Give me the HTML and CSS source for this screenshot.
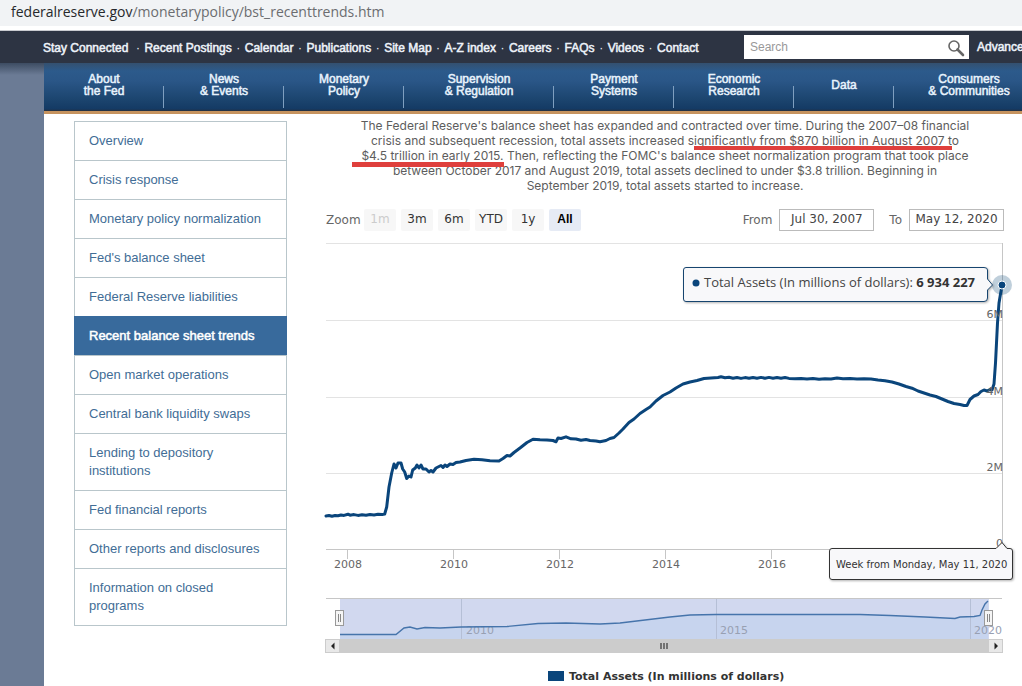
FILE: index.html
```html
<!DOCTYPE html>
<html lang="en">
<head>
<meta charset="utf-8">
<title>Recent balance sheet trends</title>
<link rel="stylesheet" href="styles.css">
</head>
<body>
<div class="address"><span class="address-host">federalreserve.gov</span>/monetarypolicy/bst_recenttrends.htm</div>
<header class="topbar">
  <nav class="toplinks" aria-label="Utility">
    <a class="wide" href="#">Stay Connected</a><a href="#">Recent Postings</a><a href="#">Calendar</a><a href="#">Publications</a><a href="#">Site Map</a><a href="#">A-Z index</a><a href="#">Careers</a><a href="#">FAQs</a><a href="#">Videos</a><a href="#">Contact</a>
  </nav>
  <form class="search">
    <input type="search" placeholder="Search" aria-label="Search">
    <button type="submit" aria-label="Submit search">
      <svg width="18" height="18" viewBox="0 0 18 18"><circle cx="7" cy="7" r="5" fill="none" stroke="#666" stroke-width="1.600"/><path d="M10.500 10.500L16 16" stroke="#666" stroke-width="2.600" stroke-linecap="round"/></svg>
    </button>
  </form>
  <a class="advanced" href="#">Advanced</a>
</header>
<div class="page">
  <nav class="mainnav" aria-label="Main">
    <a href="#">About<br>the Fed</a><a href="#">News<br>&amp; Events</a><a href="#">Monetary<br>Policy</a><a class="w150" href="#">Supervision<br>&amp; Regulation</a><a href="#">Payment<br>Systems</a><a href="#">Economic<br>Research</a><a class="w100" href="#">Data</a><a class="w150" href="#">Consumers<br>&amp; Communities</a>
  </nav>
  <div class="columns">
    <nav class="sidenav" aria-label="Section">
      <a href="#">Overview</a>
      <a href="#">Crisis response</a>
      <a href="#">Monetary policy normalization</a>
      <a href="#">Fed's balance sheet</a>
      <a href="#">Federal Reserve liabilities</a>
      <a class="current" href="#" aria-current="page">Recent balance sheet trends</a>
      <a href="#">Open market operations</a>
      <a href="#">Central bank liquidity swaps</a>
      <a href="#">Lending to depository institutions</a>
      <a href="#">Fed financial reports</a>
      <a href="#">Other reports and disclosures</a>
      <a href="#">Information on closed programs</a>
    </nav>
    <main class="content">
      <p class="intro">The Federal Reserve's balance sheet has expanded and contracted over time. During the 2007–08 financial<br>crisis and subsequent recession, total assets increased s<span class="mark">ignificantly from $870 billion in August 2007 t</span>o<br><span class="mark low">$4.5 trillion in early 2015.</span> Then, reflecting the FOMC's balance sheet normalization program that took place<br>between October 2017 and August 2019, total assets declined to under $3.8 trillion. Beginning in<br>September 2019, total assets started to increase.</p>
      <form class="range">
        <span class="zoom-label">Zoom</span>
        <div class="zoom">
          <button type="button" disabled>1m</button><button type="button">3m</button><button type="button">6m</button><button type="button">YTD</button><button type="button">1y</button><button class="on" type="button">All</button>
        </div>
        <label class="from">From <input type="text" value="Jul 30, 2007"></label>
        <label>To <input type="text" value="May 12, 2020"></label>
      </form>
      <svg class="chart" viewBox="320 240 702 446" role="img" aria-label="Total assets in millions of dollars">
        <path class="grid" d="M326 243.500H1002M326 320.500H1002M326 397.500H1002M326 473.500H1002"/>
        <path class="axis" d="M326 549.500H1002M347.500 549V559M453.500 549V559M559.500 549V559M665.500 549V559M771.500 549V559M1002.500 243V549"/>
        <g class="lbl" text-anchor="middle">
          <text x="348" y="568">2008</text><text x="454" y="568">2010</text><text x="560" y="568">2012</text><text x="666" y="568">2014</text><text x="772" y="568">2016</text>
        </g>
        <path class="line" d="M326 516L329 515.500L332 516.200L335 515.500L338 515.800L341 515L344 515.400L348 514.200L350 515.200L354 514.600L358 515.400L362 514.800L366 515.300L370 514.500L374 515L378 514.300L382 514.600L384.700 514L386.700 507L389 487L391.700 473L394 464L396 468L398 463L401 463L402.700 469L404.700 472L406.700 478.500L409 476L411 477L412.700 470L415.300 468L417 465L419 468L421 465L423 469L426 469L429 472L431 470.500L433 472L436 468L439 466.500L441 465.500L443 467.500L445 465L447 466.500L450 464L453 464.500L456 462.500L460 462L466 460.500L474 459.300L482 459.800L490 460.800L499 461L503 458.500L507 455.500L510 456L514 452.500L520 448L527 442.500L533 439.200L540 439.800L547 440L553 440.500L556 441.800L558 438L561 438.500L566 436.800L571 438.800L576 439L581 440.300L586 439.500L590 440.500L596 441L600 441.800L606 440.500L610 438.500L614 437.500L619 433L623 429L629 422.500L634 419L640 413.500L646 409.500L650 407L656 401L663 395.500L670 392L676 388L683 384L690 382L697 380.500L704 378.500L711 378L718 377.500L721 376.800L725 377.700L729 377.300L733 378.300L737 377.500L741 378.400L745 377.600L749 378.300L753 377.500L757 378.200L761 377.400L765 378.200L769 377.400L773 378.200L777 377.500L781 378.200L785 377.500L789 378.400L795 378.800L801 378.500L807 379L813 378.500L819 379.300L825 378.700L831 379L837 378L843 378.700L850 378.500L857 379L864 378.800L871 379L878 380L885 380.700L892 382L899 384L906 386.500L912 388.200L918 391L924 393L930 395L936 396.500L942 399L948 401.500L954 403.500L960 404.500L964 405.500L967 405.500L970 399.500L974 396L978 394.500L981 391.500L984 390L987 391L990 389.500L992 390L994 384L995.500 363L997.500 323L999 303L1000.500 294L1002 286"/>
        <g class="lbl ylbl" text-anchor="end">
          <text x="1003" y="318">6M</text><text x="1003" y="395">4M</text><text x="1003" y="471">2M</text><text x="1003" y="547">0</text>
        </g>
        <circle cx="1002" cy="285" r="10" fill="#003e70" fill-opacity=".25"/>
        <circle cx="1002" cy="285" r="4" fill="#0a457b" stroke="#fff"/>
        <path class="tip tip-blue" d="M686 267.500H984Q987.500 267.500 987.500 270V279L992.500 285L987.500 290V298Q987.500 301.500 984 301.500H686Q683.500 301.500 683.500 299V270Q683.500 267.500 686 267.500Z"/>
        <circle cx="696" cy="283" r="3.500" fill="#0a457b"/>
        <text class="tiptext" x="704" y="287">Total Assets (In millions of dollars): <tspan class="bold">6 934 227</tspan></text>
        <path class="tip" d="M832 548.500H996L1002 542.500L1007 548.500H1010Q1012.500 548.500 1012.500 551V577Q1012.500 579.500 1010 579.500H832Q829.500 579.500 829.500 577V551Q829.500 548.500 832 548.500Z"/>
        <text class="datetext" x="836" y="568">Week from Monday, May 11, 2020</text>
        <path class="axis" d="M326 598.500H1002"/>
        <rect x="340" y="599" width="649" height="40" fill="#d1d8ef"/>
        <path fill="#c7d4ee" d="M340 639V634.500H396L404 628L410 627L417 629L425 627.500L440 628L461 627L507 626.500L538 623.500L566 623L600 624L620 623L670 617L690 615L716 614.500H860L890 615.500L925 617L955 618.500L960 617L980 616L985 604L988 601V639Z"/>
        <path d="M461.500 599V639M716.500 599V639M970.500 599V639" stroke="#b5bfd6"/>
        <g class="navlbl"><text x="466" y="634">2010</text><text x="720" y="634">2015</text><text x="974" y="634">2020</text></g>
        <path fill="none" stroke="#4674ab" stroke-width="1.400" d="M340 634.500H396L404 628L410 627L417 629L425 627.500L440 628L461 627L507 626.500L538 623.500L566 623L600 624L620 623L670 617L690 615L716 614.500H860L890 615.500L925 617L955 618.500L960 617L974 616.500L980 615.500L982 610L985 604L988 601"/>
        <g fill="#f5f5f5" stroke="#999"><rect x="335.500" y="610.500" width="8" height="15"/><rect x="984.500" y="610.500" width="8" height="15"/></g>
        <path d="M338.500 614V622M340.500 614V622M987.500 614V622M989.500 614V622" stroke="#888"/>
        <rect x="339" y="639" width="650" height="14" fill="#ccc"/>
        <g fill="#e8e8e8" stroke="#ccc"><rect x="325.500" y="639.500" width="14" height="13"/><rect x="988.500" y="639.500" width="14" height="13"/></g>
        <path d="M334.500 642.500V649.500L331 646ZM994.500 642.500V649.500L998 646Z" fill="#222"/>
        <path d="M661 643V649M664 643V649M667 643V649" stroke="#555" stroke-width="1.500"/>
        <rect x="548" y="671" width="16" height="10" fill="#0a457b"/>
        <text class="legend" x="569" y="680">Total Assets (In millions of dollars)</text>
      </svg>
    </main>
  </div>
</div>
</body>
</html>
```
FILE: styles.css
```css
* { box-sizing: border-box; }
body {
  margin: 0;
  min-height: 100vh;
  display: flex;
  flex-direction: column;
  overflow-x: hidden;
  background: #fff;
  font-family: "Liberation Sans", Arial, sans-serif;
}
a { color: inherit; text-decoration: none; }
.address {
  height: 26px;
  padding-left: 11px;
  margin-bottom: 4px;
  background: #f1f3f5;
  color: #6b6d70;
  font: 14px/24px "Open Sans", sans-serif;
}
.address-host { color: #26282b; }
.topbar {
  height: 33px;
  flex: none;
  display: flex;
  align-items: center;
  padding-left: 43px;
  border-top: 1px solid #c9cbd0;
  background: #2d3443;
  color: #eef3fa;
  font-size: 12px;
  -webkit-text-stroke: 0.5px currentColor;
  white-space: nowrap;
}
.toplinks { width: 701px; flex: none; display: flex; padding-top: 1px; }
.toplinks a + a::before {
  content: "·";
  display: inline-block;
  width: 13px;
  text-align: center;
  -webkit-text-stroke: 0;
}
.toplinks .wide { margin-right: 3px; }
.search { display: flex; width: 225px; height: 24px; flex: none; background: #fff; margin-right: 8px; }
.search input {
  flex: 1;
  min-width: 0;
  border: 0;
  padding: 0 6px;
  background: none;
  font: 12px "Liberation Sans", Arial, sans-serif;
  -webkit-text-stroke: 0;
}
.search input::placeholder { color: #999; }
.search button { border: 0; padding: 4px 4px 0 0; background: none; }
.page {
  flex: 1;
  padding-left: 44px;
  background: linear-gradient(#3d4c62, #6b7b95 12px) left / 44px 100% no-repeat;
}
.mainnav {
  display: flex;
  height: 51px;
  overflow: hidden;
  border-bottom: 3px solid #c6935e;
  background: linear-gradient(#34506f, #2c5a8b 8px, #2a5687 18px, #1c456f 36px, #143a64 46px, #262f3c 48px);
  color: #e8f3fd;
  font-size: 12px;
  -webkit-text-stroke: 0.5px currentColor;
  line-height: 12px;
  text-align: center;
}
.mainnav a {
  width: 120px;
  flex: none;
  display: flex;
  flex-direction: column;
  justify-content: center;
  padding-bottom: 5px;
  background: linear-gradient(#7f9fc0, #7f9fc0) right 23px / 1px 22px no-repeat;
}
.mainnav .w150 { width: 150px; }
.mainnav .w100 { width: 100px; }
.columns { display: flex; padding-left: 30px; }
.sidenav {
  width: 213px;
  flex: none;
  margin-top: 7px;
  border: 1px solid #b9c6cb;
  align-self: flex-start;
  color: #426d96;
  font-size: 13px;
  line-height: 18px;
}
.sidenav a { display: block; padding: 10px 20px 10px 14px; }
.sidenav a + a { border-top: 1px solid #b9c6cb; }
.sidenav .current {
  margin: 0 -1px;
  padding-left: 15px;
  background: #386a9c;
  border-color: #386a9c;
  color: #fff;
  -webkit-text-stroke: 0.5px currentColor;
}
.content { flex: 1; min-width: 0; padding-left: 33px; font-family: "DejaVu Sans", sans-serif; }
.intro {
  margin: 4px 12px 0 0;
  color: #5d5d5d;
  font-family: Inter, "DejaVu Sans", sans-serif;
  font-size: 12px;
  line-height: 15px;
  text-align: center;
  white-space: nowrap;
}
.mark { position: relative; }
.mark::after {
  content: "";
  position: absolute;
  left: 0;
  right: 0;
  bottom: -2px;
  height: 4px;
  background: #df3f3c;
}
.mark.low::after { bottom: -4px; left: -9px; height: 5px; }
.range {
  display: flex;
  align-items: center;
  height: 22px;
  margin: 16px 18px 9px 6px;
  color: #666;
  font-size: 12px;
}
.zoom-label { width: 38px; }
.zoom { display: flex; gap: 5px; }
.zoom button {
  width: 32px;
  height: 22px;
  padding: 0 0 2px;
  border: 0;
  border-radius: 2px;
  background: #f7f7f7;
  color: #333;
  font: 12px/20px "DejaVu Sans", sans-serif;
}
.zoom button:disabled { color: #ccc; }
.zoom .on { background: #e6ebf5; color: #000; font-family: "Liberation Sans", Arial, sans-serif; font-weight: bold; }
.range label { display: flex; align-items: center; gap: 7px; margin-left: 15px; }
.range .from { margin-left: auto; }
.range input {
  width: 95px;
  height: 22px;
  border: 1px solid #bbb;
  padding: 0 0 2px;
  color: #444;
  text-align: center;
  font: 12px "DejaVu Sans", sans-serif;
}
.chart { display: block; width: 100%; height: auto; }
.grid { fill: none; stroke: #e3e3e3; }
.axis { fill: none; stroke: #c6c6c6; }
.line { fill: none; stroke: #0a457b; stroke-width: 3; stroke-linejoin: round; stroke-linecap: round; }
.lbl { fill: #666; font-size: 11px; }
.navlbl { fill: #98a0b2; font-size: 11px; }
.tip { fill: #f8f8fa; stroke: #333; filter: drop-shadow(1px 1px 1px rgba(0, 0, 0, .3)); }
.tip-blue { stroke: #17456f; }
.tiptext { fill: #444; font-family: "Open Sans", sans-serif; font-size: 13px; }
.bold { fill: #333; font-weight: bold; }
.datetext { fill: #333; font-size: 10px; }
.legend { fill: #333; font-size: 11px; font-weight: bold; }
```
